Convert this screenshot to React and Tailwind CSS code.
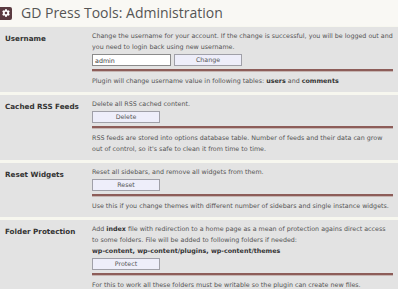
import { FaCog } from "react-icons/fa";

function Button({ children }) {
  return (
    <div className="flex h-[12px] w-[68px] items-center justify-center border border-[#a0a0a8] bg-[#eeeefa] text-[6.3px] leading-none text-[#555]">
      {children}
    </div>
  );
}

function Divider() {
  return <div className="mt-[3px] h-[3px] border-b border-[#c6b5b2] bg-[#8d5d59]" />;
}

function Section({ label, children }) {
  return (
    <div className="flex bg-[#e3e3e3] pb-[6px] pt-[3px]">
      <div className="w-[92px] shrink-0 pl-[5px] pt-[3px] text-[7.2px] font-bold leading-[11px] text-[#333]">
        {label}
      </div>
      <div className="flex-1 pr-[5px] text-[6.35px] leading-[11px] text-[#555]">{children}</div>
    </div>
  );
}

export default function App() {
  return (
    <div className="h-[289px] w-[398px] overflow-hidden bg-[#f7f7ef]" style={{ fontFamily: '"DejaVu Sans", Verdana, sans-serif' }}>
      <div className="flex h-[26px] items-center gap-[9px] bg-[#f9f8f4]">
        <div className="flex h-[13px] w-[12px] items-center justify-center rounded-r-[2px] bg-[#5a3a40]">
          <FaCog className="h-[8px] w-[8px] text-white" />
        </div>
        <h1 className="text-[14px] leading-none text-[#555]" style={{ fontFamily: '"Open Sans", sans-serif' }}>
          GD Press Tools: Administration
        </h1>
      </div>
      <div className="h-[1px]" />
      <div className="flex flex-col gap-[3px]">
        <Section label="Username">
          <p>Change the username for your account. If the change is successful, you will be logged out and you need to login back using new username.</p>
          <div className="mt-[2px] flex gap-[3px]">
            <div className="flex h-[12px] w-[79px] items-center border border-[#8b8b8b] bg-white pl-[2px] text-[6.35px] text-[#444]">admin</div>
            <Button>Change</Button>
          </div>
          <Divider />
          <p className="mt-[3px]">
            Plugin will change username value in following tables: <span className="font-bold text-[#333]">users</span> and{" "}
            <span className="font-bold text-[#333]">comments</span>
          </p>
        </Section>
        <Section label="Cached RSS Feeds">
          <p>Delete all RSS cached content.</p>
          <div className="mt-[2px]">
            <Button>Delete</Button>
          </div>
          <Divider />
          <p className="mt-[3px]">
            RSS feeds are stored into options database table. Number of feeds and their data can grow out of control, so it's safe to clean it from time to time.
          </p>
        </Section>
        <Section label="Reset Widgets">
          <p>Reset all sidebars, and remove all widgets from them.</p>
          <div className="mt-[2px]">
            <Button>Reset</Button>
          </div>
          <Divider />
          <p className="mt-[3px]">Use this if you change themes with different number of sidebars and single instance widgets.</p>
        </Section>
        <Section label="Folder Protection">
          <p>
            Add <span className="font-bold text-[#333]">index</span> file with redirection to a home page as a mean of protection agains direct access
            <br />
            to some folders. File will be added to following folders if needed:
          </p>
          <p className="font-bold text-[#333]">wp-content, wp-content/plugins, wp-content/themes</p>
          <div className="mt-[2px]">
            <Button>Protect</Button>
          </div>
          <Divider />
          <p className="mt-[3px]">For this to work all these folders must be writable so the plugin can create new files.</p>
        </Section>
      </div>
    </div>
  );
}
